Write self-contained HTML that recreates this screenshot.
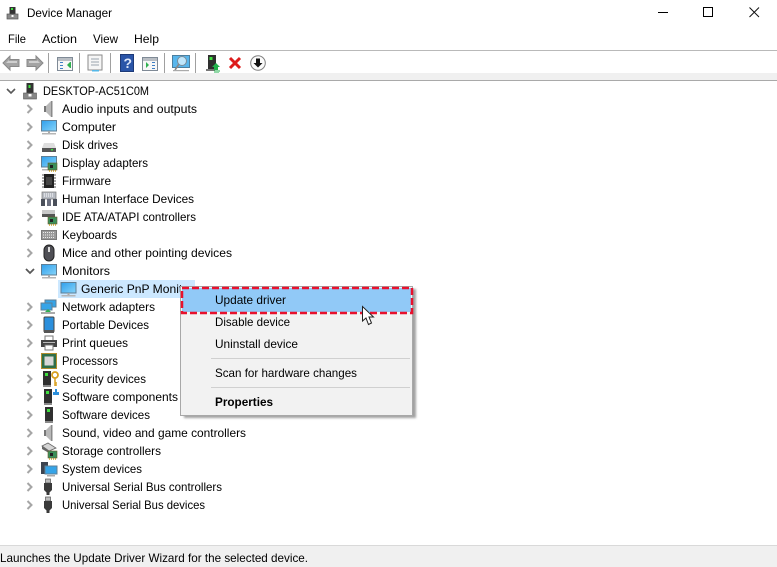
<!DOCTYPE html>
<html><head><meta charset="utf-8"><style>
html,body{margin:0;padding:0;background:#fff;width:777px;height:567px;overflow:hidden}
svg{display:block}
text{font-family:"Liberation Sans",sans-serif;font-size:12px;fill:#000}
</style></head><body>
<svg width="777" height="567" viewBox="0 0 777 567" xmlns="http://www.w3.org/2000/svg">
<defs>
<filter id="b" x="-10%" y="-10%" width="120%" height="120%"><feGaussianBlur stdDeviation="1"/></filter>
<linearGradient id="sc" x1="0" y1="0" x2="1" y2="1"><stop offset="0" stop-color="#2f9fec"/><stop offset="1" stop-color="#86d4f9"/></linearGradient>
<g id="ch"><path d="M-2-4 2 0-2 4" fill="none" stroke="#a6a6a6" stroke-width="2"/></g>
<g id="mon"><rect x="-7.500" y="-6.500" width="15" height="10.500" fill="url(#sc)" stroke="#5f7f96"/><rect x="-1" y="4" width="2" height="2" fill="#aaa"/><rect x="-7" y="6" width="14" height="1.500" fill="#b5b5b5"/></g>
<g id="pc"><rect x="-4" y="-8" width="8" height="14" fill="#303030"/><rect x="-2" y="-6" width="3" height="3" fill="#3fe03f"/><rect x="-4" y="6" width="8" height="2" fill="#8a8a8a"/></g>
<g id="spk"><path d="M-4-3h2V3h-2z" fill="#777"/><path d="M-2-3 3-8V8L-2 3z" fill="#b8b8b8"/><path d="M3-8h1.500V8H3z" fill="#8a8a8a"/></g>
<g id="card"><rect x="-3" y="-2" width="9" height="7" fill="#3b8f5a" stroke="#6b5b2a" stroke-width=".6"/><rect x="-1" y="0" width="3" height="3" fill="#222"/><path d="M-2 6h8" stroke="#c9a32e" stroke-width="1.400" stroke-dasharray="1 1"/></g>
<g id="usb"><rect x="-2.500" y="-8" width="5" height="4" fill="#bdbdbd" stroke="#555" stroke-width=".7"/><path d="M-4-4H4V3L1.500 5.500V8H-1.500V5.500L-4 3z" fill="#3a3a3a"/></g>
</defs>

<!-- title bar -->
<g transform="translate(13,13)"><rect x="-3.500" y="-6" width="6" height="8" fill="#333"/><rect x="-2" y="-5" width="2" height="2" fill="#3fe03f"/><rect x="-6" y="1" width="11" height="5" fill="#8a8a8a" stroke="#555" stroke-width=".7"/><rect x="-1.500" y="2" width="2" height="2" fill="#fff"/></g>
<text x="27" y="17" textLength="85" lengthAdjust="spacingAndGlyphs">Device Manager</text>
<path d="M658 12.500H668" stroke="#000"/>
<rect x="703.500" y="7.500" width="9" height="9" fill="none" stroke="#000"/>
<path d="M749.500 7.500 759 17M759 7.500 749.500 17" stroke="#111" fill="none"/>

<!-- menu -->
<text x="8" y="43" textLength="18" lengthAdjust="spacingAndGlyphs">File</text>
<text x="42" y="43" textLength="35" lengthAdjust="spacingAndGlyphs">Action</text>
<text x="93" y="43" textLength="25" lengthAdjust="spacingAndGlyphs">View</text>
<text x="134" y="43" textLength="25" lengthAdjust="spacingAndGlyphs">Help</text>
<rect x="0" y="50" width="777" height="1" fill="#b9b9b9"/>

<!-- toolbar -->
<g transform="translate(12,63)"><path d="M-9 0-2-7V-3.500H7V3.500H-2V7z" fill="#a3a3a3" stroke="#888" stroke-width="1"/><path d="M-6 0-3-3V-2H5V0z" fill="#cfcfcf"/></g>
<g transform="translate(34,63)"><path d="M9 0 2-7V-3.500H-7V3.500H2V7z" fill="#a3a3a3" stroke="#888" stroke-width="1"/><path d="M6 0 3-3V-2H-5V0z" fill="#cfcfcf"/></g>
<path d="M48.500 53V73M79.500 53V73M110.500 53V73M164.500 53V73M195.500 53V73" stroke="#a0a0a0"/>
<g transform="translate(65,64)"><rect x="-7.500" y="-6.500" width="15" height="13" fill="#f7f7f7" stroke="#7f8a96"/><rect x="-7" y="-6" width="14" height="3" fill="#b9bec4"/><path d="M-5-2h3v1h-3zM-5 1h3v1h-3zM-5 4h3v1h-3z" fill="#3f7fc4"/><path d="M2 1 5-2V4z" fill="#30b050"/><path d="M5-2h1V4H5z" fill="#30b050"/></g>
<g transform="translate(95,63)"><rect x="-7" y="-8" width="14" height="15" fill="#f6f6f6" stroke="#8a8a8a"/><path d="M-4-4H4M-4-1H4M-4 2H4" stroke="#9aa4ae"/><rect x="-3" y="7" width="7" height="1.500" fill="#56b8e8"/></g>
<g transform="translate(127,63)"><rect x="-6.500" y="-8.500" width="13" height="17" fill="#2a55a8" stroke="#1d3a78"/><text x="-3.500" y="5" style="font-size:14px;font-weight:bold;fill:#dfe8fa">?</text></g>
<g transform="translate(150,64)"><rect x="-7.500" y="-6.500" width="15" height="13" fill="#f7f7f7" stroke="#7f8a96"/><rect x="-7" y="-6" width="14" height="3" fill="#b9bec4"/><path d="M2-2h3v1H2zM2 1h3v1H2zM2 4h3v1H2z" fill="#3f7fc4"/><path d="M-4-2-1 1-4 4z" fill="#30b050"/></g>
<g transform="translate(181,63)"><rect x="-8.500" y="-7.500" width="17" height="12" fill="#58b6ec" stroke="#4d7f9e"/><circle cx="1" cy="-2" r="4.500" fill="#bfe6fb" stroke="#7a8c98"/><path d="M-2 1-6 7" stroke="#888" stroke-width="1.600"/><rect x="-8" y="7" width="16" height="1.200" fill="#aaa"/></g>
<g transform="translate(212,62)"><rect x="-4" y="-7" width="8" height="14" fill="#2f2f2f"/><rect x="-2.500" y="-5" width="3" height="3" fill="#3fe03f"/><rect x="-6" y="7" width="9" height="2" fill="#777"/><path d="M3 0 7 4H5V7H1V4H-1z" fill="#22b14c" transform="translate(1,1)"/><path d="M2 9h6M2 11h5" stroke="#22b14c"/></g>
<path d="M230 58 240 68M240 58 230 68" stroke="#dd1c1c" stroke-width="3"/>
<g transform="translate(258,63)"><circle r="7.300" fill="#fbfbfb" stroke="#808080"/><path d="M-2-4.500H2V0H4.500L0 4.500-4.500 0H-2z" fill="#111"/></g>
<rect x="0" y="73" width="777" height="7" fill="#f0f0f0"/>
<rect x="0" y="80" width="777" height="1" fill="#a9a9a9"/>

<!-- tree root -->
<path d="M7 89 11 93 15 89" fill="none" stroke="#595959" stroke-width="1.600"/>
<g transform="translate(30,91)"><rect x="-3.500" y="-8" width="7" height="10" fill="#333"/><rect x="-1.500" y="-6" width="2" height="3" fill="#3fe03f"/><rect x="-6.500" y="2" width="13" height="6" fill="#888" stroke="#555" stroke-width=".6"/><rect x="-1.500" y="3" width="3" height="2.500" fill="#fff"/></g>
<text x="43" y="95" textLength="106" lengthAdjust="spacingAndGlyphs">DESKTOP-AC51C0M</text>

<!-- chevrons -->
<use href="#ch" x="29.500" y="109"/><use href="#ch" x="29.500" y="127"/><use href="#ch" x="29.500" y="145"/><use href="#ch" x="29.500" y="163"/><use href="#ch" x="29.500" y="181"/><use href="#ch" x="29.500" y="199"/><use href="#ch" x="29.500" y="217"/><use href="#ch" x="29.500" y="235"/><use href="#ch" x="29.500" y="253"/>
<path d="M26 269 30 273 34 269" fill="none" stroke="#595959" stroke-width="1.800"/>
<use href="#ch" x="29.500" y="307"/><use href="#ch" x="29.500" y="325"/><use href="#ch" x="29.500" y="343"/><use href="#ch" x="29.500" y="361"/><use href="#ch" x="29.500" y="379"/><use href="#ch" x="29.500" y="397"/><use href="#ch" x="29.500" y="415"/><use href="#ch" x="29.500" y="433"/><use href="#ch" x="29.500" y="451"/><use href="#ch" x="29.500" y="469"/><use href="#ch" x="29.500" y="487"/><use href="#ch" x="29.500" y="505"/>

<!-- icons -->
<use href="#spk" x="48" y="109"/>
<use href="#mon" x="49" y="127"/>
<g transform="translate(49,146)"><path d="M-5-3H5L7 2H-7z" fill="#dedede"/><rect x="-7" y="2" width="14" height="4" fill="#555"/><rect x="2" y="3" width="2" height="1.500" fill="#3fe03f"/></g>
<use href="#mon" x="49" y="163"/><use href="#card" x="51" y="165"/>
<g transform="translate(49,181)"><rect x="-5" y="-7" width="10" height="14" fill="#222"/><rect x="-3" y="-4" width="6" height="8" fill="#444"/><path d="M-7-6H7M-7-3H7M-7 0H7M-7 3H7M-7 6H7" stroke="#555" stroke-dasharray="2 10"/></g>
<g transform="translate(49,199)"><rect x="-7" y="-7" width="14" height="7" fill="#b8bcc4" stroke="#777" stroke-width=".7"/><path d="M-5-5H5M-5-3H5" stroke="#fff" stroke-dasharray="1 1"/><rect x="-8" y="0" width="4" height="7" fill="#4a4f5a"/><rect x="-2" y="0" width="4" height="7" fill="#6c7080"/><rect x="4" y="0" width="4" height="7" fill="#4a4f5a"/></g>
<g transform="translate(49,217)"><rect x="-7" y="-7" width="13" height="6" fill="#c9c9c9"/><rect x="-7" y="-3" width="13" height="3" fill="#555"/></g><use href="#card" x="51" y="219"/>
<g transform="translate(49,235)"><rect x="-7.500" y="-4.500" width="15" height="9" fill="#9a9a9a" stroke="#7a7a7a"/><path d="M-6-2.500H6M-6 0H6M-6 2.500H6" stroke="#ececec" stroke-dasharray="1 1"/></g>
<g transform="translate(49,253)"><rect x="-5" y="-8" width="10" height="16" rx="5" fill="#4f4f55" stroke="#222"/><rect x="-1" y="-6" width="2" height="5" fill="#ddd"/></g>
<use href="#mon" x="49" y="271"/>

<rect x="58" y="280" width="137" height="18" fill="#cce8ff"/>
<use href="#mon" x="68.500" y="289"/>
<text x="81" y="293" textLength="112" lengthAdjust="spacingAndGlyphs">Generic PnP Monitor</text>

<g transform="translate(48,307)"><rect x="-3" y="-7" width="11" height="7" fill="#35a4e8" stroke="#5f7f96"/><rect x="-7" y="-4" width="11" height="7" fill="#35a4e8" stroke="#5f7f96"/><path d="M-7 6H7" stroke="#aaa" stroke-width="2"/><path d="M-3 5 0 2 3 5z" fill="#30b050"/></g>
<g transform="translate(49,325)"><rect x="-5" y="-8" width="10" height="15" rx="1" fill="#2b8fdc" stroke="#444"/><rect x="-5" y="5" width="10" height="3" fill="#555"/></g>
<g transform="translate(49,343)"><rect x="-4" y="-7" width="8" height="5" fill="#fff" stroke="#777"/><rect x="-8" y="-3" width="16" height="7" fill="#444"/><rect x="-4" y="2" width="8" height="5" fill="#fff" stroke="#777"/><rect x="-6" y="-1" width="12" height="1" fill="#bbb"/></g>
<g transform="translate(49,361)"><rect x="-7.500" y="-7.500" width="15" height="15" fill="#2f6f4a" stroke="#b08d2e"/><rect x="-4.500" y="-4.500" width="9" height="9" fill="#d8d8d8"/></g>
<use href="#pc" x="47" y="379"/><g transform="translate(55,379)"><circle cy="-4" r="3" fill="none" stroke="#d8a020" stroke-width="1.800"/><path d="M0-1V7M0 4H2M0 6H2" stroke="#d8a020" stroke-width="1.500"/></g>
<use href="#pc" x="48" y="397"/><path d="M53 392h2v-3h2v3h2v3h-6z" fill="#2b8fdc"/>
<use href="#pc" x="49" y="415"/>
<use href="#spk" x="48" y="433"/>
<g transform="translate(49,451)"><path d="M-7-5-1-8 7-3 0 0z" fill="#d5d5d5" stroke="#666" stroke-width=".8"/><path d="M-7-5V-2L0 2V0z" fill="#666"/></g><use href="#card" x="51" y="453"/>
<g transform="translate(49,469)"><rect x="-8" y="-7" width="7" height="12" fill="#3c4450"/><rect x="-4" y="-3" width="12" height="8" fill="#35a4e8" stroke="#5f7f96"/><rect x="-2" y="6" width="8" height="1.500" fill="#aaa"/></g>
<use href="#usb" x="48" y="487"/>
<use href="#usb" x="48" y="505"/>

<!-- tree text -->
<text x="62" y="113" textLength="135" lengthAdjust="spacingAndGlyphs">Audio inputs and outputs</text>
<text x="62" y="131" textLength="54" lengthAdjust="spacingAndGlyphs">Computer</text>
<text x="62" y="149" textLength="56" lengthAdjust="spacingAndGlyphs">Disk drives</text>
<text x="62" y="167" textLength="86" lengthAdjust="spacingAndGlyphs">Display adapters</text>
<text x="62" y="185" textLength="49" lengthAdjust="spacingAndGlyphs">Firmware</text>
<text x="62" y="203" textLength="132" lengthAdjust="spacingAndGlyphs">Human Interface Devices</text>
<text x="62" y="221" textLength="134" lengthAdjust="spacingAndGlyphs">IDE ATA/ATAPI controllers</text>
<text x="62" y="239" textLength="55" lengthAdjust="spacingAndGlyphs">Keyboards</text>
<text x="62" y="257" textLength="170" lengthAdjust="spacingAndGlyphs">Mice and other pointing devices</text>
<text x="62" y="275" textLength="48" lengthAdjust="spacingAndGlyphs">Monitors</text>
<text x="62" y="311" textLength="93" lengthAdjust="spacingAndGlyphs">Network adapters</text>
<text x="62" y="329" textLength="87" lengthAdjust="spacingAndGlyphs">Portable Devices</text>
<text x="62" y="347" textLength="66" lengthAdjust="spacingAndGlyphs">Print queues</text>
<text x="62" y="365" textLength="56" lengthAdjust="spacingAndGlyphs">Processors</text>
<text x="62" y="383" textLength="84" lengthAdjust="spacingAndGlyphs">Security devices</text>
<text x="62" y="401" textLength="116" lengthAdjust="spacingAndGlyphs">Software components</text>
<text x="62" y="419" textLength="88" lengthAdjust="spacingAndGlyphs">Software devices</text>
<text x="62" y="437" textLength="184" lengthAdjust="spacingAndGlyphs">Sound, video and game controllers</text>
<text x="62" y="455" textLength="99" lengthAdjust="spacingAndGlyphs">Storage controllers</text>
<text x="62" y="473" textLength="80" lengthAdjust="spacingAndGlyphs">System devices</text>
<text x="62" y="491" textLength="160" lengthAdjust="spacingAndGlyphs">Universal Serial Bus controllers</text>
<text x="62" y="509" textLength="143" lengthAdjust="spacingAndGlyphs">Universal Serial Bus devices</text>

<!-- context menu -->
<rect x="184" y="289" width="232" height="129" fill="#555" opacity=".55" filter="url(#b)"/>
<rect x="180.500" y="286.500" width="232" height="129" fill="#f2f2f2" stroke="#a8a8a8"/>
<rect x="182" y="288" width="229" height="24" fill="#91c9f7"/>
<rect x="182" y="288" width="230" height="25" fill="none" stroke="#e8112d" stroke-width="2.500" stroke-dasharray="7 3"/>
<text x="215" y="304" textLength="71" lengthAdjust="spacingAndGlyphs">Update driver</text>
<text x="215" y="326" textLength="75" lengthAdjust="spacingAndGlyphs">Disable device</text>
<text x="215" y="348" textLength="83" lengthAdjust="spacingAndGlyphs">Uninstall device</text>
<rect x="211" y="358" width="199" height="1" fill="#d0d0d0"/>
<text x="215" y="377" textLength="142" lengthAdjust="spacingAndGlyphs">Scan for hardware changes</text>
<rect x="211" y="387" width="199" height="1" fill="#d0d0d0"/>
<text x="215" y="406" textLength="58" lengthAdjust="spacingAndGlyphs" font-weight="bold">Properties</text>
<path d="M362.500 306.500V321L366 318 368.500 324.500 371.500 323 369 317H373.500z" fill="#fff" stroke="#222" stroke-width="1"/>

<!-- status bar -->
<rect x="0" y="545" width="777" height="22" fill="#f0f0f0"/>
<rect x="0" y="545" width="777" height="1" fill="#d9d9d9"/>
<text x="0" y="562" textLength="308" lengthAdjust="spacingAndGlyphs">Launches the Update Driver Wizard for the selected device.</text>
</svg>
</body></html>
